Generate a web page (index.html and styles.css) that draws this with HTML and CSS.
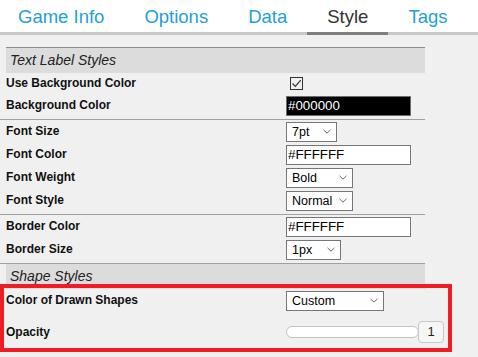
FILE: index.html
```html
<!DOCTYPE html>
<html lang="en">

<head>
    <meta charset="UTF-8">
    <meta name="viewport" content="width=device-width, initial-scale=1.0">
    <title>Style</title>
    <link rel="stylesheet" href="styles.css">
</head>

<body>
    <div class="tabs">
        <div class="tab">Game Info</div>
        <div class="tab">Options</div>
        <div class="tab">Data</div>
        <div class="tab active">Style</div>
        <div class="tab">Tags</div>
    </div>

    <div class="content">
        <div class="panel">
            <div class="section-title first">Text Label Styles</div>
            <div class="group">
                <div class="row short">
                    <label>Use Background Color</label>
                    <div class="checkbox">
                        <svg width="11" height="11" viewBox="0 0 11 11"><path d="M1.5 5.5 L4.3 8.3 L9.8 2.2" fill="none" stroke="#333" stroke-width="1.2"/></svg>
                    </div>
                </div>
                <div class="row">
                    <label>Background Color</label>
                    <div class="text-input dark">#000000</div>
                </div>
            </div>
            <div class="group">
                <div class="row">
                    <label>Font Size</label>
                    <div class="select w51"><span>7pt</span><svg class="chev" width="8" height="5" viewBox="0 0 8 5"><path d="M0.5 0.8 L4 4.2 L7.5 0.8" fill="none" stroke="#666" stroke-width="1"/></svg></div>
                </div>
                <div class="row">
                    <label>Font Color</label>
                    <div class="text-input">#FFFFFF</div>
                </div>
                <div class="row">
                    <label>Font Weight</label>
                    <div class="select w67"><span>Bold</span><svg class="chev" width="8" height="5" viewBox="0 0 8 5"><path d="M0.5 0.8 L4 4.2 L7.5 0.8" fill="none" stroke="#666" stroke-width="1"/></svg></div>
                </div>
                <div class="row">
                    <label>Font Style</label>
                    <div class="select w67"><span>Normal</span><svg class="chev" width="8" height="5" viewBox="0 0 8 5"><path d="M0.5 0.8 L4 4.2 L7.5 0.8" fill="none" stroke="#666" stroke-width="1"/></svg></div>
                </div>
            </div>
            <div class="group">
                <div class="row">
                    <label>Border Color</label>
                    <div class="text-input">#FFFFFF</div>
                </div>
                <div class="row">
                    <label>Border Size</label>
                    <div class="select w55"><span>1px</span><svg class="chev" width="8" height="5" viewBox="0 0 8 5"><path d="M0.5 0.8 L4 4.2 L7.5 0.8" fill="none" stroke="#666" stroke-width="1"/></svg></div>
                </div>
            </div>
            <div class="group">
                <div class="section-title">Shape Styles</div>
                <div class="row">
                    <label>Color of Drawn Shapes</label>
                    <div class="select w98"><span>Custom</span><svg class="chev" width="8" height="5" viewBox="0 0 8 5"><path d="M0.5 0.8 L4 4.2 L7.5 0.8" fill="none" stroke="#666" stroke-width="1"/></svg></div>
                </div>
                <div class="row tall">
                    <label>Opacity</label>
                    <div class="range-wrap">
                        <div class="range"></div>
                        <div class="number">1</div>
                    </div>
                </div>
            </div>
        </div>
        <div class="highlight"></div>
    </div>
</body>

</html>
```

FILE: styles.css
```css
body {
    margin: 0;
    font-family: "Liberation Sans", Arial, sans-serif;
    background: #f0f0f0;
    width: 478px;
    height: 357px;
    overflow: hidden;
}

.tabs {
    display: flex;
    background: #fff;
    border-bottom: 3px solid #c8c8c8;
    margin-left: -2px;
    height: 32px;
}

.tab {
    padding: 0 20px;
    font-size: 18.5px;
    line-height: 34px;
    color: #1fa0d8;
    height: 32px;
}

.tab.active {
    color: #333;
    border-bottom: 3px solid #7f7f7f;
}

.content {
    position: relative;
    padding-top: 12px;
    height: 310px;
}

.panel {
    width: 425px;
}

.section-title {
    margin-left: 6px;
    height: 25px;
    line-height: 25px;
    padding-left: 4px;
    background: #dcdcdc;
    font-style: italic;
    font-size: 14px;
    color: #222;
}

.section-title.first {
    border-top: 1px solid #8c8c8c;
}

.group {
    padding-bottom: 2px;
}

.group + .group {
    border-top: 1px solid #a0a0a0;
}

.group:last-child {
    padding-bottom: 0;
}

.row {
    display: flex;
    align-items: center;
    height: 23px;
}

.row.short {
    height: 21px;
}

.row.tall {
    height: 40px;
}

.row label {
    flex-shrink: 0;
    width: 280px;
    padding-left: 6px;
    font-weight: bold;
    font-size: 12px;
    color: #111;
    margin-top: -1px;
}

.checkbox {
    width: 11px;
    height: 11px;
    margin-left: 4px;
    border: 1px solid #333;
    display: flex;
    align-items: center;
    justify-content: center;
}

.text-input {
    box-sizing: border-box;
    width: 125px;
    height: 20px;
    border: 1px solid #767676;
    background: #fff;
    font-size: 13.33px;
    line-height: 18px;
    padding-left: 1px;
    color: #000;
}

.text-input.dark {
    background: #000;
    color: #fff;
    border-color: #6e6e6e;
}

.select {
    flex-shrink: 0;
    box-sizing: border-box;
    display: flex;
    align-items: center;
    justify-content: space-between;
    height: 20px;
    border: 1px solid #767676;
    background: #fff;
    font-size: 12.5px;
    padding: 0 5px 0 5px;
    color: #000;
}

.w51 { width: 51px; }
.w55 { width: 55px; }
.w67 { width: 67px; }
.w98 { width: 98px; }

.range-wrap {
    flex-shrink: 0;
    display: flex;
    align-items: center;
}

.range {
    box-sizing: border-box;
    width: 133px;
    height: 12px;
    border: 1px solid #c4c4c4;
    border-radius: 6px;
    background: #fff;
}

.number {
    box-sizing: border-box;
    width: 26px;
    height: 22px;
    margin-left: -1px;
    border: 1px solid #c8c8c8;
    border-radius: 4px;
    background: #f6f6f6;
    font-size: 13px;
    line-height: 20px;
    text-align: center;
    color: #222;
}

.highlight {
    position: absolute;
    left: 0;
    top: 249px;
    width: 444px;
    height: 60px;
    border: 4px solid #ee1c25;
}
```
